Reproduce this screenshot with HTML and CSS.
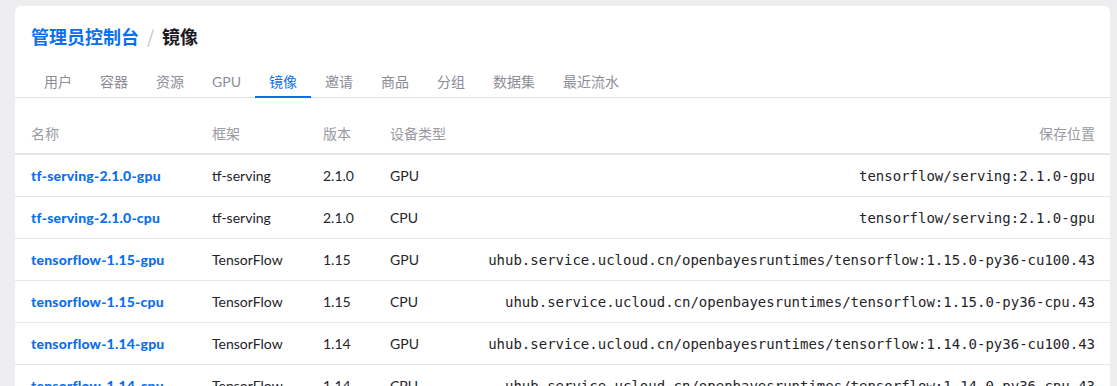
FILE: index.html
```html
<!DOCTYPE html>
<html lang="zh-CN">
<head>
<meta charset="utf-8">
<title>管理员控制台 / 镜像</title>
<link rel="stylesheet" href="styles.css">
</head>
<body>
<div class="card">
  <h1 class="crumbs"><a class="crumb-link" href="#">管理员控制台</a><span class="crumb-sep">/</span><span class="crumb-current">镜像</span></h1>
  <nav class="tabs">
    <a class="tab" href="#">用户</a>
    <a class="tab" href="#">容器</a>
    <a class="tab" href="#">资源</a>
    <a class="tab" href="#">GPU</a>
    <a class="tab tab-active" href="#">镜像</a>
    <a class="tab" href="#">邀请</a>
    <a class="tab" href="#">商品</a>
    <a class="tab" href="#">分组</a>
    <a class="tab" href="#">数据集</a>
    <a class="tab" href="#">最近流水</a>
  </nav>
  <table class="images">
    <colgroup>
      <col class="c-name"><col class="c-fw"><col class="c-ver"><col class="c-dev"><col>
    </colgroup>
    <thead>
      <tr><th>名称</th><th>框架</th><th>版本</th><th>设备类型</th><th class="loc">保存位置</th></tr>
    </thead>
    <tbody>
      <tr><td><a class="name" href="#">tf-serving-2.1.0-gpu</a></td><td>tf-serving</td><td>2.1.0</td><td>GPU</td><td class="loc mono">tensorflow/serving:2.1.0-gpu</td></tr>
      <tr><td><a class="name" href="#">tf-serving-2.1.0-cpu</a></td><td>tf-serving</td><td>2.1.0</td><td>CPU</td><td class="loc mono">tensorflow/serving:2.1.0-gpu</td></tr>
      <tr><td><a class="name" href="#">tensorflow-1.15-gpu</a></td><td>TensorFlow</td><td>1.15</td><td>GPU</td><td class="loc mono">uhub.service.ucloud.cn/openbayesruntimes/tensorflow:1.15.0-py36-cu100.43</td></tr>
      <tr><td><a class="name" href="#">tensorflow-1.15-cpu</a></td><td>TensorFlow</td><td>1.15</td><td>CPU</td><td class="loc mono">uhub.service.ucloud.cn/openbayesruntimes/tensorflow:1.15.0-py36-cpu.43</td></tr>
      <tr><td><a class="name" href="#">tensorflow-1.14-gpu</a></td><td>TensorFlow</td><td>1.14</td><td>GPU</td><td class="loc mono">uhub.service.ucloud.cn/openbayesruntimes/tensorflow:1.14.0-py36-cu100.43</td></tr>
      <tr><td><a class="name" href="#">tensorflow-1.14-cpu</a></td><td>TensorFlow</td><td>1.14</td><td>CPU</td><td class="loc mono">uhub.service.ucloud.cn/openbayesruntimes/tensorflow:1.14.0-py36-cpu.43</td></tr>
    </tbody>
  </table>
</div>
</body>
</html>
```

FILE: styles.css
```css
html, body {
  margin: 0;
  padding: 0;
  background: #eeeef0;
  overflow: hidden;
}
body {
  padding: 6px 7px 0 15px;
  font-family: Lato, "Noto Sans CJK SC", sans-serif;
  color: #1f1f24;
}
.card {
  background: #fff;
  border-radius: 6px 6px 0 0;
  padding-top: 17px;
}
.crumbs {
  margin: 0;
  padding: 0 16px;
  font-size: 18px;
  line-height: 26px;
  font-weight: 700;
  font-family: "Noto Sans CJK SC", sans-serif;
}
.crumb-link {
  color: #0b6ff0;
  text-decoration: none;
}
.crumb-sep {
  color: #c4c4ca;
  font-weight: 400;
  margin: 0 8px;
}
.crumb-current {
  color: #1a1a22;
}
.tabs {
  display: flex;
  margin-top: 17px;
  padding: 0 15px;
  border-bottom: 1px solid #e3e3e7;
}
.tab {
  padding: 6px 14px 4px;
  font-size: 14px;
  line-height: 20px;
  color: #8d8d96;
  text-decoration: none;
  font-family: Lato, "Noto Sans CJK SC", sans-serif;
  border-bottom: 2px solid transparent;
  margin-bottom: -1px;
}
.tab-active {
  color: #0b6ff0;
  border-bottom-color: #0b6ff0;
}
.images {
  width: 100%;
  margin-top: 15px;
  border-collapse: collapse;
  table-layout: fixed;
  font-size: 14px;
}
.c-name { width: 197px; }
.c-fw { width: 111px; }
.c-ver { width: 67px; }
.c-dev { width: 90px; }
.images th {
  text-align: left;
  font-weight: 400;
  color: #9a9aa2;
  height: 40px;
  padding: 0;
  border-bottom: 2px solid #e6e6e9;
  white-space: nowrap;
}
.images td {
  height: 41px;
  padding: 0;
  border-bottom: 1px solid #e8e8eb;
  white-space: nowrap;
  color: #24242a;
}
.images th:first-child, .images td:first-child {
  padding-left: 16px;
}
.images .loc {
  text-align: right;
  padding-right: 15px;
}
.name {
  color: #0b6ff0;
  font-weight: 900;
  letter-spacing: 0.2px;
  text-decoration: none;
}
.mono {
  font-family: "DejaVu Sans Mono", monospace;
  font-size: 14px;
}
```
